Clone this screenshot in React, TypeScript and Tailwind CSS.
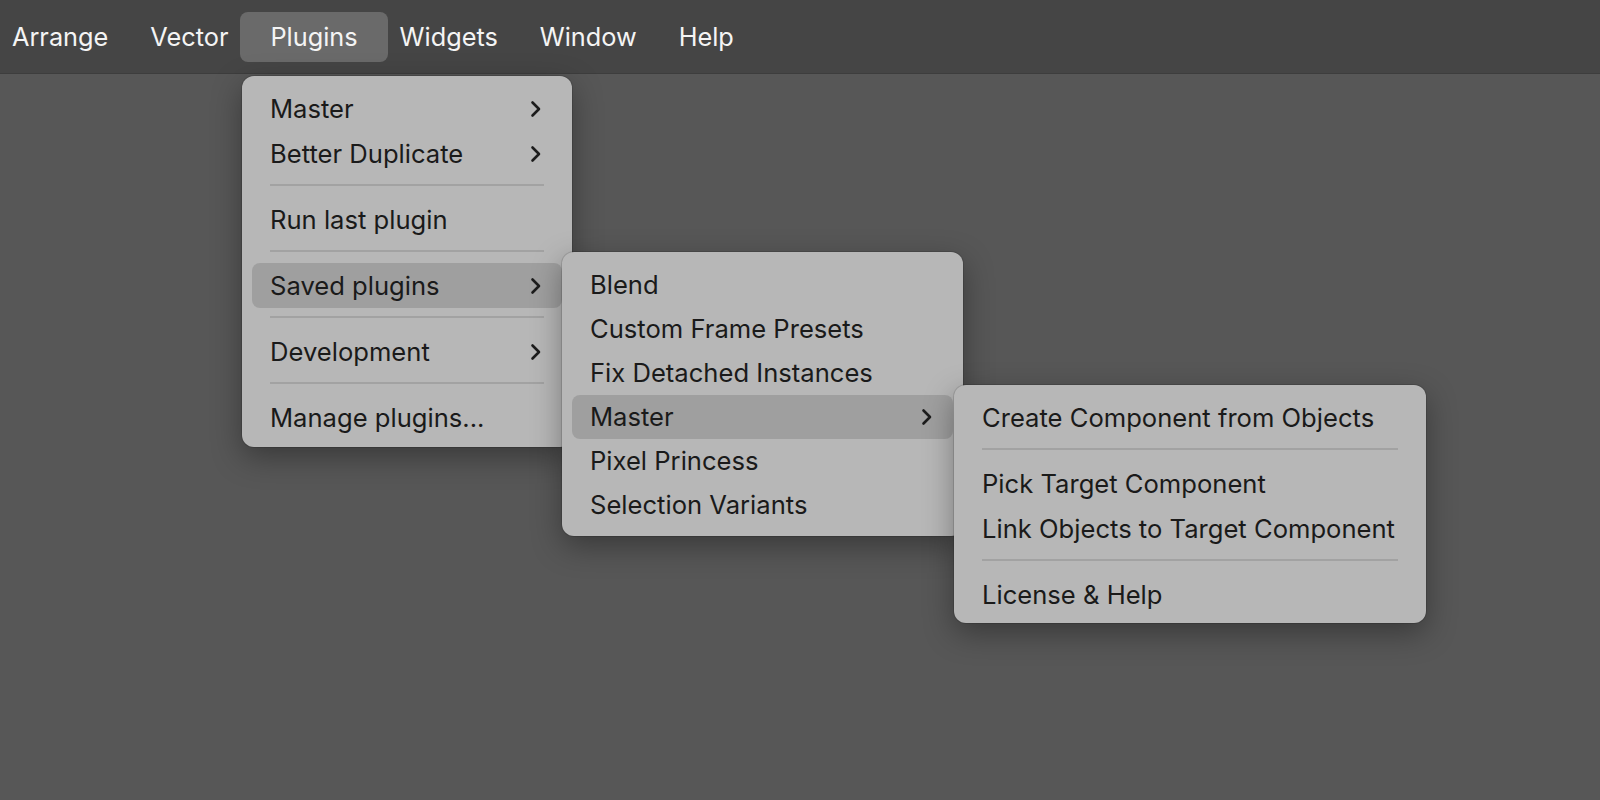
import React from "react";

type Entry =
  | { kind: "item"; label: string; sub?: boolean; active?: boolean }
  | { kind: "sep" };

const menuBar = ["Arrange", "Vector", "Plugins", "Widgets", "Window", "Help"];

const pluginsMenu: Entry[] = [
  { kind: "item", label: "Master", sub: true },
  { kind: "item", label: "Better Duplicate", sub: true },
  { kind: "sep" },
  { kind: "item", label: "Run last plugin" },
  { kind: "sep" },
  { kind: "item", label: "Saved plugins", sub: true, active: true },
  { kind: "sep" },
  { kind: "item", label: "Development", sub: true },
  { kind: "sep" },
  { kind: "item", label: "Manage plugins..." },
];

const savedMenu: Entry[] = [
  { kind: "item", label: "Blend" },
  { kind: "item", label: "Custom Frame Presets" },
  { kind: "item", label: "Fix Detached Instances" },
  { kind: "item", label: "Master", sub: true, active: true },
  { kind: "item", label: "Pixel Princess" },
  { kind: "item", label: "Selection Variants" },
];

const masterMenu: Entry[] = [
  { kind: "item", label: "Create Component from Objects" },
  { kind: "sep" },
  { kind: "item", label: "Pick Target Component" },
  { kind: "item", label: "Link Objects to Target Component" },
  { kind: "sep" },
  { kind: "item", label: "License & Help" },
];

const Chevron = () => (
  <svg width="12" height="18" viewBox="0 0 12 18" fill="none" className="shrink-0">
    <polyline
      points="2.5,2.5 9,9 2.5,15.5"
      stroke="#1c1c1c"
      strokeWidth="2.6"
      strokeLinecap="round"
      strokeLinejoin="round"
    />
  </svg>
);

const Menu = ({
  entries,
  className,
  rowH,
}: {
  entries: Entry[];
  className: string;
  rowH: string;
}) => (
  <div
    className={`absolute flex flex-col rounded-[12px] bg-[#b7b7b7] shadow-[0_10px_30px_rgba(0,0,0,0.35),0_0_0_1px_rgba(0,0,0,0.12)] ${className}`}
  >
    {entries.map((e, i) =>
      e.kind === "sep" ? (
        <div key={i} className="h-[21px] px-[28px] pt-[8px]">
          <div className="h-[2px] w-full bg-[#a2a2a2]" />
        </div>
      ) : (
        <div
          key={i}
          className={`mx-[10px] flex ${rowH} items-center justify-between rounded-[8px] pl-[18px] pr-[20px] ${
            e.active ? "bg-[#9f9f9f]" : ""
          }`}
        >
          <span className="whitespace-nowrap text-[25.6px] leading-none text-[#1a1a1a]">{e.label}</span>
          {e.sub && <Chevron />}
        </div>
      )
    )}
  </div>
);

export default function App() {
  return (
    <div
      className="relative h-[800px] w-[1600px] overflow-hidden bg-[#575757]"
      style={{ fontFamily: "Inter, 'Noto Sans', sans-serif" }}
    >
      <div className="flex h-[74px] items-center gap-[42px] border-b border-[#3d3d3d] bg-[#454545] pl-[12px]">
        {menuBar.map((m) =>
          m === "Plugins" ? (
            <span
              key={m}
              className="-mx-[30px] flex h-[50px] items-center rounded-[8px] bg-[#6a6a6a] px-[30px] text-[25.3px] text-[#f4f4f4]"
            >
              {m}
            </span>
          ) : (
            <span key={m} className="text-[25.3px] text-[#f4f4f4]">
              {m}
            </span>
          )
        )}
      </div>

      <Menu
        entries={pluginsMenu}
        rowH="h-[45px]"
        className="left-[242px] top-[76px] w-[330px] pb-[7px] pt-[10px]"
      />
      <Menu
        entries={savedMenu}
        rowH="h-[44px]"
        className="left-[562px] top-[252px] w-[401px] pb-[9px] pt-[11px]"
      />
      <Menu
        entries={masterMenu}
        rowH="h-[45px]"
        className="left-[954px] top-[385px] w-[472px] pb-[6px] pt-[10px]"
      />
    </div>
  );
}
